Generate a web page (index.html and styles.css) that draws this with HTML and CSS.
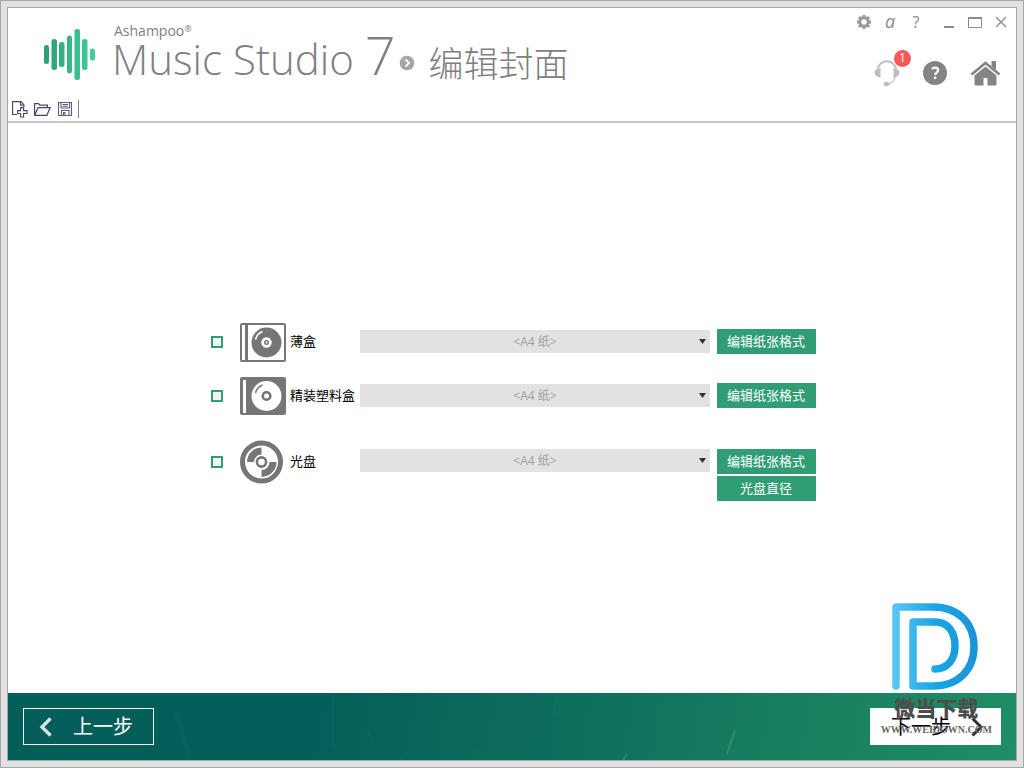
FILE: index.html
```html
<!DOCTYPE html>
<html lang="zh-CN">
<head>
<meta charset="utf-8">
<meta name="viewport" content="width=device-width, initial-scale=1">
<title>Ashampoo Music Studio 7</title>
<link rel="stylesheet" href="styles.css">
</head>
<body>
<div class="frame">
<div class="window">
  <header class="header">
    <div class="masthead">
      <svg class="logo" viewBox="0 0 52 52" width="52" height="52" aria-hidden="true">
        <defs><linearGradient id="bars" gradientUnits="userSpaceOnUse" x1="0" y1="0" x2="52" y2="0"><stop offset="0" stop-color="#2f9c73"/><stop offset="1" stop-color="#42d19c"/></linearGradient></defs>
        <g fill="url(#bars)">
          <rect x="0" y="16" width="5" height="19" rx="2.5"/><rect x="7.5" y="10" width="5.5" height="31" rx="2.5"/><rect x="15" y="13" width="5.5" height="25" rx="2.5"/><rect x="23" y="6.500" width="5" height="38" rx="2.5"/><rect x="30.500" y="0" width="5.500" height="51" rx="2.5"/><rect x="38" y="10" width="5.500" height="31" rx="2.5"/><rect x="46" y="19.500" width="5" height="12" rx="2.5"/>
        </g>
      </svg>
      <div class="brand">
        <span class="maker">Ashampoo<sup>®</sup></span>
        <div class="title-row">
          <span class="product">Music Studio <span class="version">7</span></span>
          <svg class="crumb" viewBox="0 0 16 16" width="16" height="16" aria-hidden="true"><circle cx="8" cy="8" r="7.300" fill="#a6a6a6"/><path d="M6.500 4.300 10 8l-3.500 3.700" fill="none" stroke="#fff" stroke-width="1.800"/></svg>
          <h1 class="page-title">编辑封面</h1>
        </div>
      </div>
      <div class="tools">
        <div class="window-controls">
          <button class="icon-btn" aria-label="设置"><svg viewBox="0 0 16 16" width="16" height="16"><g fill="none" stroke="#999"><circle cx="8" cy="8" r="4.200" stroke-width="3"/><path stroke-width="3" d="M8 .9v2M8 13.100v2M.9 8h2M13.100 8h2M3 3l1.400 1.400M11.600 11.600 13 13M3 13l1.400-1.400M11.600 4.400 13 3"/></g></svg></button>
          <button class="icon-btn letter-a" aria-label="Ashampoo">a</button>
          <button class="icon-btn letter-q" aria-label="帮助">?</button>
          <button class="icon-btn gap-before" aria-label="最小化"><svg viewBox="0 0 16 16" width="16" height="16"><path d="M3 13h10" stroke="#8c8c8c" stroke-width="2"/></svg></button>
          <button class="icon-btn" aria-label="最大化"><svg viewBox="0 0 16 16" width="16" height="16"><path d="M1.500 3.500h13v10h-13z" fill="none" stroke="#8c8c8c"/><path d="M1 4h14" stroke="#8c8c8c" stroke-width="2"/></svg></button>
          <button class="icon-btn" aria-label="关闭"><svg viewBox="0 0 16 16" width="16" height="16"><path d="m3 3 10 10M13 3 3 13" stroke="#8c8c8c" stroke-width="1.300"/></svg></button>
        </div>
        <div class="actions">
          <button class="icon-btn support" aria-label="支持">
            <svg viewBox="0 0 26 27" width="26" height="27"><g fill="none" stroke="#bfbfbf"><path d="M3.500 8.500C5.500 3.600 9 1.200 12.800 1.200s7.500 2.400 9.400 7.300" stroke-width="2"/><path d="M21 17c-.5 4.500-3 6.500-8 7" stroke-width="1.300"/></g><g fill="#bfbfbf"><path d="M6.500 8v9.500C2.500 17 .5 15 .5 12.700S2.500 8.500 6.500 8ZM19.500 8v9.500c4-.5 6-2.500 6-4.800S23.500 8.500 19.500 8Z"/><rect x="9.500" y="22" width="6" height="4.200" rx="2.100"/></g></svg>
            <span class="badge">1</span>
          </button>
          <button class="icon-btn" aria-label="问题"><svg viewBox="0 0 24 24" width="24" height="24"><circle cx="12" cy="12" r="12" fill="#848484"/><path d="M8.900 8c1-1 2-1.300 3.200-1.300 1.900 0 3 .9 3 2.500 0 2.500-2.900 2.500-2.900 4.800" fill="none" stroke="#fff" stroke-width="2.200"/><circle cx="12.100" cy="16.800" r="1.400" fill="#fff"/></svg></button>
          <button class="icon-btn" aria-label="主页"><svg viewBox="0 0 31 25" width="31" height="25"><path d="M1.500 13.500 15.500 2l14 11.500" fill="none" stroke="#848484" stroke-width="2.600"/><path d="M21.500 0H26v9l-4.500-3.700ZM15.500 5.500 4.500 14.500V23q0 1.500 1.500 1.500h7.500V17h4v7.500h7.500q1.500 0 1.500-1.500v-8.500Z" fill="#848484"/></svg></button>
        </div>
      </div>
    </div>
    <div class="toolbar">
      <button class="icon-btn" aria-label="新建"><svg viewBox="0 0 17 17" width="17" height="17"><g fill="none" stroke="#424867" stroke-width="1.100"><path d="M5 13.500H.6V.6H9l2.900 3V6"/><path d="M8.500.6v3.500h3.400"/><path d="M8.600 6.600h3v3h3.400v2.900h-3.400v3.500h-3v-3.500H5.600V9.600h3z"/></g></svg></button>
      <button class="icon-btn" aria-label="打开"><svg viewBox="0 0 17 17" width="17" height="17"><path d="M.6 14.400V2.600h4l1.200 1.600h7.600v2.400M.6 14.400 4 6.600h12.200l-3.400 7.800z" fill="none" stroke="#424867" stroke-width="1.200"/></svg></button>
      <button class="icon-btn" aria-label="保存"><svg viewBox="0 0 17 17" width="17" height="17"><path d="M2.500 1.500h13v13h-13zM5 1.500v5.500h8.500V1.500M6.500 3.500H12M6.500 5.300H12M5.500 14.500v-5H13v5M7.500 14.500v-3H9v3" fill="none" stroke="#5a5f7b" stroke-width="1.100"/></svg></button>
      <span class="separator"></span>
    </div>
  </header>

  <main class="content">
    <form class="covers">
      <div class="row">
        <input type="checkbox" id="slim">
        <label class="cover" for="slim">
          <span class="picture"><svg viewBox="0 0 46 39" width="46" height="39"><rect x="1" y="1" width="44" height="37" rx="1" fill="#fff" stroke="#767676" stroke-width="2"/><path d="M6.500 1v37" stroke="#767676" stroke-width="3"/><circle cx="26.500" cy="19.500" r="15" fill="#767676"/><circle cx="26.500" cy="19.500" r="5.200" fill="#fff"/><circle cx="26.500" cy="19.500" r="2.500" fill="#767676"/><circle cx="26.500" cy="19.500" r="1" fill="#fff"/><path d="M15.500 16.500q1.500-6 7-8" fill="none" stroke="#fff" stroke-width="1.600"/></svg></span>
          <span class="cover-name">薄盒</span>
        </label>
        <select aria-label="薄盒纸张"><option>&lt;A4 纸&gt;</option></select>
        <div class="buttons"><button class="action" type="button">编辑纸张格式</button></div>
      </div>
      <div class="row">
        <input type="checkbox" id="jewel">
        <label class="cover" for="jewel">
          <span class="picture"><svg viewBox="0 0 46 39" width="46" height="39"><rect width="46" height="38" y="0" rx="2" fill="#767676"/><path d="M4.500 3v33" stroke="#fff" stroke-width="3"/><circle cx="26.500" cy="19" r="15" fill="#fff"/><circle cx="26.500" cy="19" r="3.800" fill="#fff" stroke="#767676" stroke-width="2.600"/><path d="M15.500 16q1.500-6 7-8" fill="none" stroke="#767676" stroke-width="1.600"/></svg></span>
          <span class="cover-name">精装塑料盒</span>
        </label>
        <select aria-label="精装塑料盒纸张"><option>&lt;A4 纸&gt;</option></select>
        <div class="buttons"><button class="action" type="button">编辑纸张格式</button></div>
      </div>
      <div class="row row-disc">
        <input type="checkbox" id="disc">
        <label class="cover" for="disc">
          <span class="picture"><svg viewBox="0 0 44 44" width="44" height="44"><g fill="none" stroke="#767676"><circle cx="21.500" cy="22" r="19" stroke-width="5"/><circle cx="21.500" cy="22" r="4.600" stroke-width="2.600"/><path d="M10.500 22a11 11 0 0 1 11-11M21.500 33.500a11.500 11.500 0 0 0 11.500-11.500" stroke-width="7"/></g></svg></span>
          <span class="cover-name">光盘</span>
        </label>
        <select aria-label="光盘纸张"><option>&lt;A4 纸&gt;</option></select>
        <div class="buttons"><button class="action" type="button">编辑纸张格式</button><button class="action" type="button">光盘直径</button></div>
      </div>
    </form>
  </main>

  <footer class="footer">
    <svg class="streaks" viewBox="0 0 1008 67" preserveAspectRatio="none" aria-hidden="true"><g fill="none" stroke="#6ec7a4" stroke-width="3" opacity=".04"><path d="M325 0v55M360 38l5 12M397 60l-6 7M465 55l8 12M550 0l-4 22"/><path stroke-width="5" d="M168 19l14 45"/></g><path d="m719 61 8-24M615 67l4-6" stroke="#8fd0b4" stroke-width="2" opacity=".2"/></svg>
    <button class="nav" type="button"><svg viewBox="0 0 14 20" width="14" height="20"><path d="M11.500 1.500 3 10l8.500 8.500" fill="none" stroke="#d5e5e2" stroke-width="3.400"/></svg><span>上一步</span></button>
    <button class="nav nav-next" type="button"><span>下一步</span><svg viewBox="0 0 14 20" width="14" height="20"><path d="M2.500 1.500 11 10l-8.500 8.500" fill="none" stroke="#333" stroke-width="3"/></svg></button>
    <div class="watermark">
      <svg viewBox="0 0 88 88" width="88" height="88" aria-hidden="true"><defs><linearGradient id="dlogo" gradientUnits="userSpaceOnUse" x1="0" y1="0" x2="88" y2="0"><stop offset="0" stop-color="#5bc8f3"/><stop offset=".5" stop-color="#18a5e6"/><stop offset="1" stop-color="#1c93d5"/></linearGradient></defs><g fill="none" stroke="url(#dlogo)" stroke-width="7.500" stroke-linejoin="round" stroke-linecap="round"><path d="M4 84V5h37c25 0 41 16 41 39.500S66 84 41 84H21V20h22c13 0 20 10 20 24s-8 23-20 23"/></g></svg>
      <strong class="mark-name">微当下载</strong>
      <span class="mark-url">WWW.WEIDOWN.COM</span>
    </div>
  </footer>
</div>
</div>
</body>
</html>
```
FILE: styles.css
```css
* { box-sizing: border-box; }

body {
  margin: 0;
  font: 13px/16px "Open Sans", "Noto Sans CJK SC", sans-serif;
  color: #000;
}

button { font: inherit; border: 0; padding: 0; cursor: pointer; }
svg { display: block; flex: none; }

.frame {
  display: flex;
  min-height: 100vh;
  padding: 6px;
  border: 1px solid #a6a6a6;
  background: #e1e1e1;
}

.window {
  flex: 1;
  display: flex;
  flex-direction: column;
  border: 1px solid #a6a6a6;
  background: #fff;
}

.header { border-bottom: 2px solid #c6c6c6; }

.masthead {
  display: flex;
  align-items: flex-start;
  height: 92px;
  padding-left: 36px;
}

.logo { margin-top: 21px; }

.brand { margin: 14px 0 0 16px; color: #808080; font-weight: 300; }

.maker { display: block; padding-left: 2px; font-size: 14px; line-height: 18px; font-weight: 400; }
.maker sup { font-size: 9px; line-height: 0; vertical-align: 4px; }

.title-row { display: flex; align-items: center; height: 44px; }
.product { padding-bottom: 12px; font-size: 42px; line-height: 44px; white-space: nowrap; }
.version { font-size: 54px; line-height: 44px; }
.crumb { margin: 2px 14px 0 3px; }

.page-title {
  margin: 0;
  font: 300 35px/44px "Noto Sans CJK SC", sans-serif;
  white-space: nowrap;
}

.tools {
  margin-left: auto;
  display: flex;
  flex-direction: column;
  align-items: flex-end;
}

.icon-btn {
  display: flex;
  justify-content: center;
  align-items: center;
  background: none;
}

.window-controls {
  display: flex;
  gap: 10px;
  height: 16px;
  margin: 6px 7px 0 0;
}
.window-controls .icon-btn { width: 16px; height: 16px; color: #8c8c8c; font-size: 16px; }
.window-controls .letter-a { padding-bottom: 2px; font-size: 18px; font-weight: 500; font-style: italic; }
.window-controls .gap-before { margin-left: 7px; }

.actions {
  display: flex;
  align-items: center;
  gap: 23px;
  height: 26px;
  margin: 30px 15px 0 0;
}

.support { position: relative; }

.badge {
  position: absolute;
  top: -10px;
  left: 20px;
  width: 17px;
  height: 17px;
  border-radius: 50%;
  background: #ff5757;
  color: #fff;
  font-size: 12px;
  line-height: 16px;
  text-align: center;
}

.toolbar { display: flex; align-items: center; gap: 5px; height: 21px; padding: 0 0 3px 4px; }
.separator { width: 1px; height: 18px; background: #848484; }

.content {
  flex: 1;
  display: flex;
  justify-content: center;
  align-items: center;
  padding: 8px 0 0 3px;
}

.covers { display: grid; gap: 15px; }
.row { display: flex; align-items: flex-start; }

.row input {
  appearance: none;
  width: 12px;
  height: 12px;
  margin: 13px 17px 0 0;
  border: 2px solid #309d75;
  background: #f3f3f3;
}
.row input:checked { background: #309d75; }

.cover { display: flex; align-items: center; gap: 4px; width: 120px; white-space: nowrap; }
.picture { width: 46px; }
.cover-name { padding-bottom: 3px; }

.row select {
  appearance: none;
  width: 350px;
  height: 23px;
  margin: 7px 7px 0 0;
  border: 0;
  border-radius: 0;
  padding: 0;
  font: inherit;
  font-size: 12px;
  color: #a0a0a0;
  text-align: center;
  text-align-last: center;
  background: #e2e2e2 url("data:image/svg+xml,%3Csvg xmlns='http://www.w3.org/2000/svg' width='7' height='5'%3E%3Cpath d='M0 0h7L3.500 5z' fill='%23333'/%3E%3C/svg%3E") no-repeat right 4px center;
}

.buttons { display: grid; gap: 2px; margin-top: 6px; }

.action {
  width: 99px;
  height: 25px;
  padding: 0 1px 2px 0;
  background: #309d75;
  color: #fff;
}

.row-disc { margin-top: 9px; }
.row-disc input { margin-top: 16px; }
.row-disc select, .row-disc .buttons { margin-top: 9px; }

.footer {
  position: relative;
  display: flex;
  justify-content: space-between;
  padding: 15px;
  background: linear-gradient(100deg, #045e5a 0%, #045e5a 30%, #0f705d 58%, #1a8460 85%, #1f8e63 100%);
}

.streaks { position: absolute; inset: 0; width: 100%; height: 100%; }

.nav {
  position: relative;
  display: flex;
  align-items: center;
  justify-content: space-between;
  width: 131px;
  height: 37px;
  padding: 0 20px 0 15px;
  border: 1px solid #fff;
  background: transparent;
  color: #fff;
  font-size: 20px;
  line-height: 24px;
}
.nav-next { padding: 0 16px 0 20px; background: #fff; color: #000; }

.watermark {
  position: absolute;
  right: 24px;
  bottom: 23px;
  display: flex;
  flex-direction: column;
  align-items: center;
  pointer-events: none;
  color: #4d4d4d;
}
.mark-name { margin: 5px 0 4px; font: 900 21px/24px "Noto Sans CJK SC", sans-serif; }
.mark-url { font: bold 10px/14px "Liberation Serif", serif; color: #666; }
```
